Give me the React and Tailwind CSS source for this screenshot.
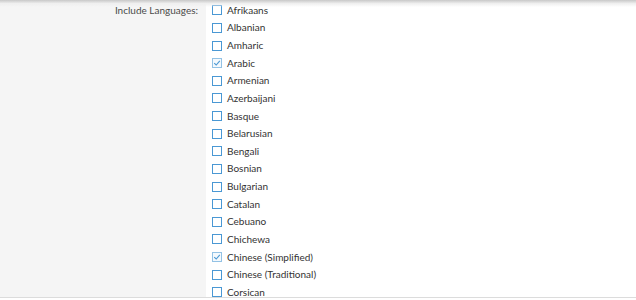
import React from "react";

const languages = [
  ["Afrikaans", false],
  ["Albanian", false],
  ["Amharic", false],
  ["Arabic", true],
  ["Armenian", false],
  ["Azerbaijani", false],
  ["Basque", false],
  ["Belarusian", false],
  ["Bengali", false],
  ["Bosnian", false],
  ["Bulgarian", false],
  ["Catalan", false],
  ["Cebuano", false],
  ["Chichewa", false],
  ["Chinese (Simplified)", true],
  ["Chinese (Traditional)", false],
  ["Corsican", false],
];

const Box = ({ checked }) => (
  <span
    className={
      "flex h-[10px] w-[10px] shrink-0 items-center justify-center border " +
      (checked ? "border-[#93c2e5] bg-[#f4f9fd]" : "border-[#4a98d4] bg-white")
    }
  >
    {checked && (
      <svg width="8" height="8" viewBox="0 0 8 8" fill="none">
        <path d="M1.2 4.2 3.2 6 6.8 1.8" stroke="#4a98d4" strokeWidth="1.1" />
      </svg>
    )}
  </span>
);

export default function App() {
  return (
    <div className="relative h-[300px] w-[636px] overflow-hidden bg-white font-['Lato',sans-serif]">
      <div className="flex h-[298px] border-b border-[#dcdcdc]">
        <div className="w-[206px] shrink-0 bg-[#f5f5f5] pr-[8px] pt-[1.5px] text-right text-[10px] leading-[17.6px] text-[#4a4a4a]">
          Include Languages:
        </div>
        <ul className="flex-1 pl-[6px] pt-[1.5px]">
          {languages.map(([name, checked]) => (
            <li
              key={name}
              className="flex h-[17.625px] items-center gap-[5px] text-[10px] text-[#333]"
            >
              <Box checked={checked} />
              <span>{name}</span>
            </li>
          ))}
        </ul>
      </div>
      <div className="pointer-events-none absolute inset-x-0 top-0 h-[7px] bg-gradient-to-b from-[#c8c8c8] via-[#efefef] to-transparent" />
    </div>
  );
}
